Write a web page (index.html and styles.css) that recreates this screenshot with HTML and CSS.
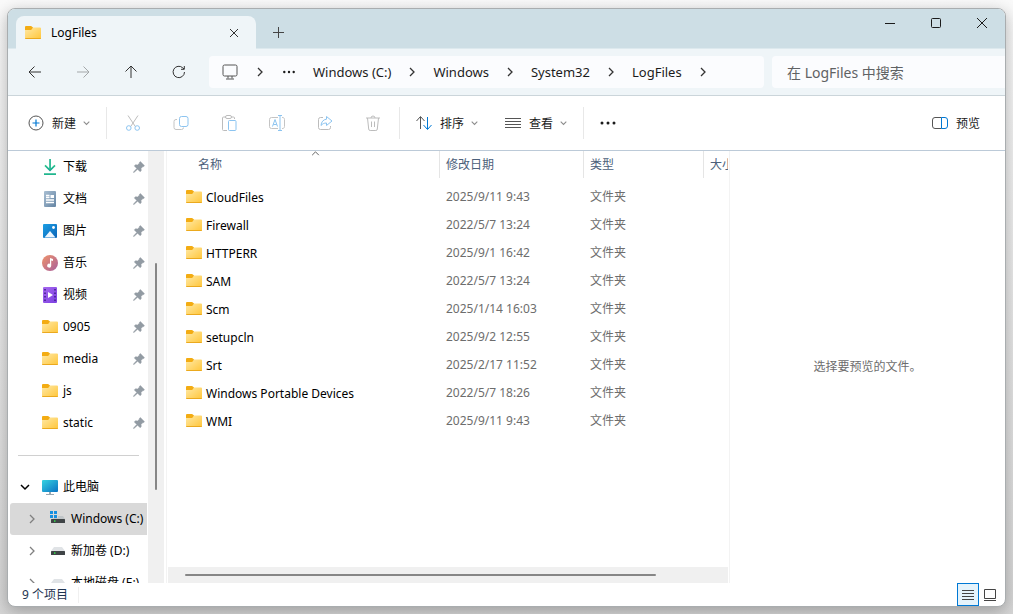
FILE: index.html
```html
<!DOCTYPE html>
<html lang="zh-CN">
<head>
<meta charset="utf-8">
<title>LogFiles</title>
<link rel="stylesheet" href="styles.css">
</head>
<body>
<svg class="defs" aria-hidden="true">
  <defs>
    <linearGradient id="gFolder" x1="0" y1="0" x2="1" y2="1"><stop offset="0" stop-color="#ffe9a6"/><stop offset="1" stop-color="#ffc63a"/></linearGradient>
    <linearGradient id="gDown" x1="0" y1="0" x2="0" y2="1"><stop offset="0" stop-color="#2cc58c"/><stop offset="1" stop-color="#12a594"/></linearGradient>
    <linearGradient id="gDoc" x1="0" y1="0" x2="1" y2="1"><stop offset="0" stop-color="#a9bfd3"/><stop offset="1" stop-color="#6484a3"/></linearGradient>
    <linearGradient id="gPic" x1="0" y1="0" x2="1" y2="1"><stop offset="0" stop-color="#1c9fe4"/><stop offset="1" stop-color="#0b64b8"/></linearGradient>
    <linearGradient id="gMusic" x1="0" y1="0" x2="1" y2="1"><stop offset="0" stop-color="#f0936a"/><stop offset="1" stop-color="#a8609c"/></linearGradient>
    <linearGradient id="gVideo" x1="0" y1="0" x2="1" y2="1"><stop offset="0" stop-color="#a768f0"/><stop offset="1" stop-color="#7b3fe0"/></linearGradient>
    <linearGradient id="gPc" x1="0" y1="0" x2="1" y2="1"><stop offset="0" stop-color="#36d3e0"/><stop offset="1" stop-color="#0a72c4"/></linearGradient>
  </defs>
  <symbol id="folder" viewBox="0 0 16 16">
    <path d="M0 2a1 1 0 0 1 1-1h5a1 1 0 0 1 .8.400L8 2.500V5H0z" fill="#f3ac13"/>
    <path d="M0 5h6.200L8 2.500h7a1 1 0 0 1 1 1V13a1 1 0 0 1-1 1H1a1 1 0 0 1-1-1z" fill="url(#gFolder)"/>
    <path d="M0 13a1 1 0 0 0 1 1h14a1 1 0 0 0 1-1z" fill="#eba91e"/>
  </symbol>
  <symbol id="pin" viewBox="0 0 12 12">
    <path d="M7.300.5l4.200 4.200-.9.900-.6-.2-2 2.100.3 2-1.200 1.200L4.600 8.200 1.200 11.300.5 11.500.7 10.800 3.800 7.400 1.300 4.900 2.500 3.700l2 .3 2.100-2-.2-.6z" fill="#929ba3" stroke="#929ba3" stroke-width=".5"/>
  </symbol>
  <symbol id="download" viewBox="0 0 16 16"><path d="M3 6.300l5 5 5-5" fill="none" stroke="url(#gDown)" stroke-width="1.700"/><path d="M2 14.300h12V16H2zM7.200 0h1.700v11H7.200z" fill="#20b68e"/></symbol>
  <symbol id="doc" viewBox="0 0 16 16"><rect x="2" width="12" height="16" rx="1" fill="url(#gDoc)"/><path d="M4 4.500h3.500M4 6.500h3.500M4 9h8M4 11.500h8" stroke="#fff" stroke-width="1.300"/><rect x="8.500" y="4" width="3.500" height="3" fill="#fff"/></symbol>
  <symbol id="picture" viewBox="0 0 16 16"><rect x="1" y="1" width="14" height="14" rx="1" fill="url(#gPic)"/><path d="M2.500 14.500 8 8l5.500 6.500z" fill="#eef7ff"/><circle cx="11.500" cy="4.500" r="1.400" fill="#fff"/></symbol>
  <symbol id="music" viewBox="0 0 16 16"><circle cx="8" cy="8" r="8" fill="url(#gMusic)"/><path d="M8 3l3 1v2L9.200 5.500v5.200a2 2 0 1 1-1.200-1.900z" fill="#fff"/></symbol>
  <symbol id="video" viewBox="0 0 16 16"><rect x="1" y="0" width="14" height="16" rx="1" fill="url(#gVideo)"/><path d="M2.200 2h1.600v1.600H2.200zm0 3.500h1.600v1.600H2.200zm0 3.500h1.600v1.600H2.200zm0 3.500h1.600v1.600H2.200zM12.200 2h1.600v1.600h-1.600zm0 3.500h1.600v1.600h-1.600zm0 3.500h1.600v1.600h-1.600zm0 3.500h1.600v1.600h-1.600z" fill="#42208c"/><path d="M6 5l5 3-5 3z" fill="#fff"/></symbol>
  <symbol id="pc" viewBox="0 0 16 16"><rect y="1" width="16" height="12" rx="1" fill="url(#gPc)"/><path d="M7 13h2v2H7zM4 15h8v1H4z" fill="#9aa7b1"/></symbol>
  <symbol id="drive" viewBox="0 0 14 8"><path d="M3 0h8l3 4H0z" fill="#e0e3e6"/><rect y="4" width="14" height="4" rx=".5" fill="#3f4446"/><rect x="3" y="5.300" width="1.500" height="1.500" fill="#35e04c"/></symbol>
  <symbol id="sysdrive" viewBox="0 0 16 12"><path d="M8 5h5l2 3H2z" fill="#c0c5c8"/><rect x="1" y="8" width="14" height="4" rx=".5" fill="#3f4446"/><rect x="4" y="9.300" width="1.500" height="1.500" fill="#35e04c"/><path d="M0 0h8v7H0z" fill="#d9d9d9"/><path d="M0 0h3v3H0zM4 0h3v3H4zM0 4h3v3H0zM4 4h3v3H4z" fill="#168fe0"/></symbol>
  <symbol id="right" viewBox="0 0 8 10"><path d="M2 1l4 4-4 4" fill="none" stroke="currentColor" stroke-width="1.300"/></symbol>
  <symbol id="down" viewBox="0 0 10 8"><path d="M1 2l4 4 4-4" fill="none" stroke="currentColor" stroke-width="1.500"/></symbol>
</svg>

<div class="window">
  <header class="titlebar">
    <div class="tab">
      <svg class="i16"><use href="#folder"/></svg>
      <span class="tab-name">LogFiles</span>
      <button class="plain tab-close" aria-label="关闭选项卡"><svg width="10" height="10" viewBox="0 0 10 10"><path d="M1 1l8 8M9 1l-8 8"/></svg></button>
    </div>
    <button class="plain new-tab" aria-label="新建选项卡"><svg width="11" height="11" viewBox="0 0 11 11"><path d="M5.500 0v11M0 5.500h11"/></svg></button>
    <div class="controls">
      <button class="plain" aria-label="最小化"><svg width="10" height="10" viewBox="0 0 10 10"><path d="M0 5.500h10"/></svg></button>
      <button class="plain" aria-label="最大化"><svg width="10" height="10" viewBox="0 0 10 10"><rect x=".5" y=".5" width="9" height="9" rx="1"/></svg></button>
      <button class="plain" aria-label="关闭"><svg width="10" height="10" viewBox="0 0 10 10"><path d="M0 0l10 10M10 0L0 10"/></svg></button>
    </div>
  </header>

  <nav class="navbar" aria-label="导航">
    <div class="history">
      <button class="plain" aria-label="后退"><svg width="14" height="14" viewBox="0 0 14 14"><path d="M13 7H1M6.500 1.500 1 7l5.500 5.500"/></svg></button>
      <button class="plain" aria-label="前进" disabled><svg width="14" height="14" viewBox="0 0 14 14"><path d="M1 7h12M7.500 1.500 13 7l-5.500 5.500"/></svg></button>
      <button class="plain" aria-label="向上"><svg width="14" height="14" viewBox="0 0 14 14"><path d="M7 13V1M1.500 6.500 7 1l5.500 5.500"/></svg></button>
      <button class="plain" aria-label="刷新"><svg width="14" height="14" viewBox="0 0 14 14"><path d="M12.500 7A5.700 5.700 0 1 1 10.800 2.900L12 4M12.300 1v3.300H9"/></svg></button>
    </div>
    <div class="crumbs">
      <svg class="i16 place" viewBox="0 0 16 16"><rect x="1" y="1" width="14" height="11" rx="1.500"/><path d="M6 12v2.500M10 12v2.500M4 15h8"/></svg>
      <svg class="sep first"><use href="#right"/></svg>
      <button class="plain dots" aria-label="更多路径"><svg width="12" height="4" viewBox="0 0 12 4"><circle cx="1.300" cy="2" r="1.200"/><circle cx="6" cy="2" r="1.200"/><circle cx="10.700" cy="2" r="1.200"/></svg></button>
      <a href="#c">Windows (C:)</a><svg class="sep"><use href="#right"/></svg>
      <a href="#w">Windows</a><svg class="sep"><use href="#right"/></svg>
      <a href="#s">System32</a><svg class="sep"><use href="#right"/></svg>
      <a href="#l">LogFiles</a><svg class="sep"><use href="#right"/></svg>
    </div>
    <input class="search" type="search" aria-label="搜索" placeholder="在 LogFiles 中搜索">
  </nav>

  <div class="toolbar">
    <button class="plain cmd"><svg class="i16" viewBox="0 0 16 16"><circle cx="8" cy="8" r="7" stroke="#555"/><path d="M8 4.500v7M4.500 8h7" stroke="#0078d4" stroke-width="1.200"/></svg><span>新建</span><svg class="drop"><use href="#down"/></svg></button>
    <span class="rule"></span>
    <div class="actions">
      <button class="plain" aria-label="剪切" disabled><svg class="i16" viewBox="0 0 16 16"><path d="M3 .5l7.300 11M13 .5 5.700 11.500" stroke="#bcbcbc"/><g stroke="#8cc4f0"><circle cx="3.800" cy="13" r="2.300"/><circle cx="12.200" cy="13" r="2.300"/></g></svg></button>
      <button class="plain" aria-label="复制" disabled><svg class="i16" viewBox="0 0 16 16"><path d="M4 4.500H3a2 2 0 0 0-2 2v6a2 2 0 0 0 2 2h5.500a2 2 0 0 0 2-2" stroke="#c4c4c4"/><rect x="6.500" y="1.500" width="8.500" height="10" rx="2" stroke="#8cc4f0"/></svg></button>
      <button class="plain" aria-label="粘贴" disabled><svg class="i16" viewBox="0 0 16 16"><path d="M5 2H2.500a1 1 0 0 0-1 1v11.500a1 1 0 0 0 1 1H6M10 2h2.500a1 1 0 0 1 1 1v1" stroke="#bcbcbc"/><rect x="4.500" y=".5" width="6" height="3" rx="1.500" stroke="#bcbcbc"/><rect x="7.500" y="5.500" width="7.500" height="10" rx="1" stroke="#8cc4f0"/></svg></button>
      <button class="plain" aria-label="重命名" disabled><svg class="i16" viewBox="0 0 16 16"><path d="M9 2.500H2.500a2 2 0 0 0-2 2v7a2 2 0 0 0 2 2H9M13 2.500a2 2 0 0 1 2.500 2v7a2 2 0 0 1-2.500 2" stroke="#c4c4c4"/><path d="M3.500 11.500 6 4.500l2.500 7M4.300 9.500h3.400M11 .8v14.400M9 .5h4M9 15.500h4" stroke="#8cc4f0"/></svg></button>
      <button class="plain" aria-label="共享" disabled><svg class="i16" viewBox="0 0 16 16"><path d="M6 2.500H3.500a2 2 0 0 0-2 2v8a2 2 0 0 0 2 2h8a2 2 0 0 0 2-2V11" stroke="#bcbcbc"/><path d="M9.500 1.500 15 6l-5.500 4.500V8C7 8 5.500 8.800 4 10.500c.3-3.500 2.200-6 5.500-6.300z" stroke="#8cc4f0" stroke-linejoin="round"/></svg></button>
      <button class="plain" aria-label="删除" disabled><svg class="i16" viewBox="0 0 16 16"><path d="M1 3h14M2.500 3l1.200 11a1.500 1.500 0 0 0 1.500 1.500h5.600a1.500 1.500 0 0 0 1.500-1.500l1.200-11M6 3a2 2 0 0 1 4 0M6.500 6.500V12M9.500 6.500V12" stroke="#bcbcbc"/></svg></button>
    </div>
    <span class="rule"></span>
    <button class="plain cmd sort"><svg class="i16" viewBox="0 0 16 16"><path d="M4.500 14V2M.5 6l4-4.500L8.500 6" stroke="#555"/><path d="M11.500 2v12M7.500 10l4 4.500 4-4.500" stroke="#0078d4"/></svg><span>排序</span><svg class="drop"><use href="#down"/></svg></button>
    <button class="plain cmd view"><svg class="i16" viewBox="0 0 16 16"><path d="M0 3.500h16M0 6.500h16M0 9.500h16M0 12.500h16" stroke="#555"/></svg><span>查看</span><svg class="drop"><use href="#down"/></svg></button>
    <span class="rule"></span>
    <button class="plain more" aria-label="更多"><svg width="16" height="4" viewBox="0 0 16 4"><circle cx="2" cy="2" r="1.500"/><circle cx="8" cy="2" r="1.500"/><circle cx="14" cy="2" r="1.500"/></svg></button>
    <button class="plain cmd preview-btn"><svg class="i16" viewBox="0 0 16 16"><path d="M9.500 2.500H3a2.500 2.500 0 0 0-2.500 2.500v6A2.500 2.500 0 0 0 3 13.500h6.500" stroke="#555"/><path d="M9.500 2.500H13A2.500 2.500 0 0 1 15.500 5v6a2.500 2.500 0 0 1-2.500 2.500H9.500z" stroke="#0078d4"/></svg><span>预览</span></button>
  </div>

  <main class="content">
    <aside class="side">
      <ul class="tree">
        <li><svg class="i16"><use href="#download"/></svg><span>下载</span><svg class="pin"><use href="#pin"/></svg></li>
        <li><svg class="i16"><use href="#doc"/></svg><span>文档</span><svg class="pin"><use href="#pin"/></svg></li>
        <li><svg class="i16"><use href="#picture"/></svg><span>图片</span><svg class="pin"><use href="#pin"/></svg></li>
        <li><svg class="i16"><use href="#music"/></svg><span>音乐</span><svg class="pin"><use href="#pin"/></svg></li>
        <li><svg class="i16"><use href="#video"/></svg><span>视频</span><svg class="pin"><use href="#pin"/></svg></li>
        <li><svg class="i16"><use href="#folder"/></svg><span>0905</span><svg class="pin"><use href="#pin"/></svg></li>
        <li><svg class="i16"><use href="#folder"/></svg><span>media</span><svg class="pin"><use href="#pin"/></svg></li>
        <li><svg class="i16"><use href="#folder"/></svg><span>js</span><svg class="pin"><use href="#pin"/></svg></li>
        <li><svg class="i16"><use href="#folder"/></svg><span>static</span><svg class="pin"><use href="#pin"/></svg></li>
      </ul>
      <hr class="line">
      <ul class="tree">
        <li class="root"><svg class="open"><use href="#down"/></svg><svg class="i16"><use href="#pc"/></svg><span>此电脑</span></li>
        <li class="disk selected"><svg class="closed"><use href="#right"/></svg><svg class="sys"><use href="#sysdrive"/></svg><span>Windows (C:)</span></li>
        <li class="disk"><svg class="closed"><use href="#right"/></svg><svg class="drv"><use href="#drive"/></svg><span>新加卷 (D:)</span></li>
        <li class="disk"><svg class="closed"><use href="#right"/></svg><svg class="drv"><use href="#drive"/></svg><span>本地磁盘 (E:)</span></li>
      </ul>
    </aside>
    <div class="vtrack"><div class="vthumb"></div></div>

    <section class="list">
      <div class="table-wrap">
        <table>
          <colgroup><col class="c-name"><col class="c-date"><col class="c-type"><col class="c-size"></colgroup>
          <thead><tr>
            <th><div class="head head-name">名称<svg class="asc" viewBox="0 0 10 6"><path d="M1 5l4-4 4 4"/></svg></div></th>
            <th><div class="head">修改日期</div></th>
            <th><div class="head">类型</div></th>
            <th><div class="head">大小</div></th>
          </tr></thead>
          <tbody>
            <tr><td class="name"><svg class="i16"><use href="#folder"/></svg>CloudFiles</td><td>2025/9/11 9:43</td><td>文件夹</td><td></td></tr>
            <tr><td class="name"><svg class="i16"><use href="#folder"/></svg>Firewall</td><td>2022/5/7 13:24</td><td>文件夹</td><td></td></tr>
            <tr><td class="name"><svg class="i16"><use href="#folder"/></svg>HTTPERR</td><td>2025/9/1 16:42</td><td>文件夹</td><td></td></tr>
            <tr><td class="name"><svg class="i16"><use href="#folder"/></svg>SAM</td><td>2022/5/7 13:24</td><td>文件夹</td><td></td></tr>
            <tr><td class="name"><svg class="i16"><use href="#folder"/></svg>Scm</td><td>2025/1/14 16:03</td><td>文件夹</td><td></td></tr>
            <tr><td class="name"><svg class="i16"><use href="#folder"/></svg>setupcln</td><td>2025/9/2 12:55</td><td>文件夹</td><td></td></tr>
            <tr><td class="name"><svg class="i16"><use href="#folder"/></svg>Srt</td><td>2025/2/17 11:52</td><td>文件夹</td><td></td></tr>
            <tr><td class="name"><svg class="i16"><use href="#folder"/></svg>Windows Portable Devices</td><td>2022/5/7 18:26</td><td>文件夹</td><td></td></tr>
            <tr><td class="name"><svg class="i16"><use href="#folder"/></svg>WMI</td><td>2025/9/11 9:43</td><td>文件夹</td><td></td></tr>
          </tbody>
        </table>
      </div>
      <div class="htrack"><div class="hthumb"></div></div>
    </section>

    <section class="preview">选择要预览的文件。</section>
  </main>

  <footer class="status">
    <span class="count">9 个项目</span>
    <div class="modes">
      <button class="plain mode on" aria-label="详细信息"><svg width="12" height="12" viewBox="0 0 12 12"><path d="M0 1.500h12M0 4.500h12M0 7.500h12M0 10.500h12"/></svg></button>
      <button class="plain mode" aria-label="大图标"><svg width="12" height="12" viewBox="0 0 12 12"><path d="M.5.500h11v9H.5zM0 11.500h12"/></svg></button>
    </div>
  </footer>
</div>
</body>
</html>
```
FILE: styles.css
```css
* { box-sizing: border-box; }

body {
  margin: 0;
  height: 100vh;
  padding: 8px 7px 7px;
  overflow: hidden;
  background: linear-gradient(#fafafa, #e8e8e8 50%, #d6d6d6);
  font: 12px/16px "Noto Sans", "Noto Sans CJK SC", sans-serif;
  color: #000;
}

.defs { position: absolute; width: 0; height: 0; }

.window {
  height: 100%;
  display: flex;
  flex-direction: column;
  background: #fff;
  border: 1px solid #a9adaf;
  border-radius: 8px;
  overflow: hidden;
  box-shadow: 0 4px 16px rgba(0, 0, 0, .28);
}

.plain {
  display: flex;
  align-items: center;
  justify-content: center;
  padding: 0;
  border: 0;
  background: none;
  font: inherit;
  color: #1b1b1b;
}

svg { flex: none; fill: none; stroke: none; }
.plain svg { stroke: currentColor; }
.i16 { width: 16px; height: 16px; }

/* Title bar */
.titlebar {
  display: flex;
  flex: none;
  height: 40px;
  padding-left: 8px;
  background: #cddee5;
  border-bottom: 1px solid #dde9ee;
}
.tab {
  display: flex;
  align-items: center;
  width: 240px;
  height: 33px;
  margin-top: 7px;
  padding: 0 12px 0 9px;
  border-radius: 8px 8px 0 0;
  background: #eff5f8;
}
.tab-name { flex: 1; margin-left: 10px; }
.tab-close { width: 20px; height: 20px; }
.tab-close, .history .plain { color: #333; }
.new-tab { width: 32px; margin: 8px 0 0 6px; color: #444; }
.controls { display: flex; height: 28px; margin-left: auto; }
.controls .plain { width: 46px; }

/* Navigation */
.navbar {
  display: flex;
  flex: none;
  align-items: center;
  gap: 8px;
  height: 47px;
  background: #eff5f8;
  border-bottom: 1px solid #cbd5da;
}
.history { display: flex; gap: 16px; margin: 0 6px 0 11px; }
.history .plain { width: 32px; height: 32px; }
.history .plain:disabled { color: #a3a7a9; }
.crumbs {
  display: flex;
  flex: 1;
  align-items: center;
  height: 32px;
  padding-left: 13px;
  border-radius: 4px;
  background: #fbfcfe;
  font-size: 13px;
}
.crumbs a { color: #1b1b1b; text-decoration: none; white-space: nowrap; }
.place { stroke: #555; }
.sep { width: 8px; height: 10px; margin: 0 17px; color: #333; }
.sep.first { margin: 0 18px; }
.dots { margin: 0 18px 0 1px; }
.crumbs .dots svg, .more svg { fill: #1b1b1b; stroke: none; }
.search {
  width: 233px;
  height: 32px;
  padding: 0 15px;
  border: 0;
  border-radius: 4px 0 0 4px;
  background: #fbfcfe;
  font: inherit;
  font-size: 14px;
}
.search::placeholder { color: #5f6264; opacity: 1; }

/* Commands */
.toolbar {
  display: flex;
  flex: none;
  align-items: center;
  height: 55px;
  padding: 0 25px 0 20px;
  border-bottom: 1px solid #bccad8;
}
.cmd { height: 32px; }
.cmd span { margin-left: 8px; padding-top: 1px; }
.drop { width: 7px; height: 6px; margin-left: 7px; color: #8c8c8c; }
.cmd .drop { stroke: none; }
.rule { width: 1px; height: 32px; margin-left: 16px; background: #e8e8e8; }
.actions { display: flex; gap: 16px; margin: 0 -6px 0 10px; }
.actions .plain { width: 32px; height: 32px; }
.sort { margin-left: 16px; }
.view { margin-left: 27px; }
.more { margin-left: 16px; }
.preview-btn { margin-left: auto; }

/* Panes */
.content { display: flex; flex: 1; min-height: 0; }
.side { width: 140px; flex: none; overflow: hidden; }
.tree { margin: 0; padding: 0; list-style: none; }
.tree li {
  display: flex;
  align-items: center;
  gap: 5px;
  height: 32px;
  padding: 0 3px 0 34px;
  white-space: nowrap;
}
.tree span { flex: 1; }
.tree .pin { width: 12px; height: 12px; }
.line { height: 1px; margin: 16px 9px 15px 10px; border: 0; background: #d0d0d0; }
.tree .root { gap: 0; padding-left: 12px; }
.open { width: 10px; height: 8px; margin-right: 12px; }
.root span { margin-left: 5px; }
.tree .disk { gap: 0; margin: 0 1px 0 2px; padding: 0 0 0 18px; }
.closed { width: 8px; height: 10px; margin-right: 14px; color: #808080; }
.sys { width: 16px; height: 12px; margin: 0 5px 4px 0; }
.drv { width: 14px; height: 8px; margin: 0 6px 0 1px; }
.tree .selected { background: #d9d9d9; border-radius: 3px 0 0 3px; }
.vtrack {
  display: flex;
  justify-content: center;
  flex: none;
  width: 16px;
  padding-top: 112px;
  background: #f0f0f0;
}
.vthumb { width: 2px; height: 227px; background: #868686; border-radius: 1px; }

.list {
  display: flex;
  flex-direction: column;
  flex: none;
  width: 564px;
  margin-left: 2px;
  padding: 0 1px;
  border: solid #f3f3f3;
  border-width: 0 1px;
}
.table-wrap { flex: 1; overflow: hidden; }
table { width: 560px; table-layout: fixed; border-collapse: collapse; }
.c-name { width: 271px; }
.c-date { width: 144px; }
.c-type { width: 120px; }
.c-size { width: 25px; }
th { padding: 0 0 5px; font-weight: 400; text-align: left; color: #4c607a; }
.head {
  position: relative;
  height: 27px;
  padding: 6px 0 0 6px;
  border-left: 1px solid #e5e5e5;
  white-space: nowrap;
  overflow: hidden;
}
.head-name { padding-left: 30px; border: 0; }
.asc { position: absolute; top: 0; right: 119px; width: 9px; height: 5px; stroke: #444; }
td { height: 28px; padding: 0 0 0 7px; color: #6d6d6d; white-space: nowrap; }
td.name { padding-left: 18px; color: #000; }
.name .i16 { margin-right: 4px; vertical-align: -3px; }
.htrack { flex: none; height: 16px; padding: 7px 72px 0 17px; background: #f0f0f0; }
.hthumb { height: 2px; background: #868686; border-radius: 1px; }

.preview {
  display: flex;
  flex: 1;
  align-items: center;
  justify-content: center;
  color: #6d6d6d;
}

/* Status bar */
.status { display: flex; flex: none; align-items: center; height: 23px; padding-left: 14px; color: #1e3350; }
.count { padding-right: 10px; border-right: 1px solid #f0f0f0; }
.modes { display: flex; margin-left: auto; padding-right: 4px; }
.mode { width: 22px; height: 23px; color: #444; }
.mode.on { background: #e5f3fb; border: 1px solid #0078d4; }
```
